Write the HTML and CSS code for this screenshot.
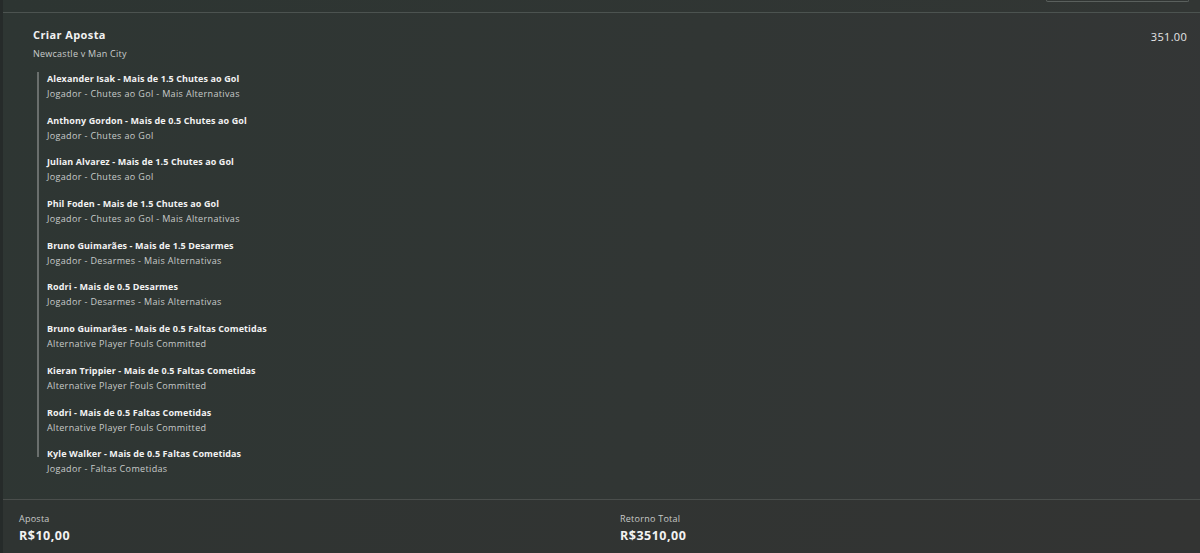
FILE: index.html
```html
<!DOCTYPE html>
<html lang="pt-BR">
<head>
    <meta charset="UTF-8">
    <meta name="viewport" content="width=device-width, initial-scale=1.0">
    <title>Criar Aposta</title>
    <link rel="stylesheet" href="styles.css">
</head>
<body>

    <!-- Top bar -->
    <div class="topbar">
        <div class="topbar-box"></div>
    </div>

    <!-- Bet builder -->
    <section class="builder">
        <div class="builder-head">
            <div>
                <h1 class="builder-title">Criar Aposta</h1>
                <p class="builder-match">Newcastle v Man City</p>
            </div>
            <span class="builder-odds">351.00</span>
        </div>

        <ul class="legs">
            <li class="leg">
                <p class="leg-name">Alexander Isak - Mais de 1.5 Chutes ao Gol</p>
                <p class="leg-market">Jogador - Chutes ao Gol - Mais Alternativas</p>
            </li>
            <li class="leg">
                <p class="leg-name">Anthony Gordon - Mais de 0.5 Chutes ao Gol</p>
                <p class="leg-market">Jogador - Chutes ao Gol</p>
            </li>
            <li class="leg">
                <p class="leg-name">Julian Alvarez - Mais de 1.5 Chutes ao Gol</p>
                <p class="leg-market">Jogador - Chutes ao Gol</p>
            </li>
            <li class="leg">
                <p class="leg-name">Phil Foden - Mais de 1.5 Chutes ao Gol</p>
                <p class="leg-market">Jogador - Chutes ao Gol - Mais Alternativas</p>
            </li>
            <li class="leg">
                <p class="leg-name">Bruno Guimarães - Mais de 1.5 Desarmes</p>
                <p class="leg-market">Jogador - Desarmes - Mais Alternativas</p>
            </li>
            <li class="leg">
                <p class="leg-name">Rodri - Mais de 0.5 Desarmes</p>
                <p class="leg-market">Jogador - Desarmes - Mais Alternativas</p>
            </li>
            <li class="leg">
                <p class="leg-name">Bruno Guimarães - Mais de 0.5 Faltas Cometidas</p>
                <p class="leg-market">Alternative Player Fouls Committed</p>
            </li>
            <li class="leg">
                <p class="leg-name">Kieran Trippier - Mais de 0.5 Faltas Cometidas</p>
                <p class="leg-market">Alternative Player Fouls Committed</p>
            </li>
            <li class="leg">
                <p class="leg-name">Rodri - Mais de 0.5 Faltas Cometidas</p>
                <p class="leg-market">Alternative Player Fouls Committed</p>
            </li>
            <li class="leg">
                <p class="leg-name">Kyle Walker - Mais de 0.5 Faltas Cometidas</p>
                <p class="leg-market">Jogador - Faltas Cometidas</p>
            </li>
        </ul>
    </section>

    <!-- Stake and return -->
    <footer class="summary">
        <div class="summary-col">
            <p class="summary-label">Aposta</p>
            <p class="summary-value">R$10,00</p>
        </div>
        <div class="summary-col">
            <p class="summary-label">Retorno Total</p>
            <p class="summary-value">R$3510,00</p>
        </div>
    </footer>

</body>
</html>
```

FILE: styles.css
```css
* {
    box-sizing: border-box;
}
html, body {
    height: 100%;
}
body {
    font-family: "Open Sans", "Noto Sans", sans-serif;
    margin: 0;
    padding: 0 0 0 3px;
    color: #f2f2f2;
    background-color: #262b2a;
    overflow: hidden;
}
p, h1, ul {
    margin: 0;
    padding: 0;
}
.topbar {
    height: 13px;
    border-bottom: 1px solid #4c5350;
    background: linear-gradient(90deg, #2d3532, #323634);
    display: flex;
    justify-content: flex-end;
    padding-right: 11px;
}
.topbar-box {
    width: 143px;
    height: 2px;
    border: 1px solid #5a605d;
    border-top: none;
    border-radius: 0 0 3px 3px;
}
.builder {
    height: 486px;
    background: linear-gradient(100deg, #2e3633 0%, #313634 55%, #343636 100%);
    padding: 15px 13px 0 30px;
}
.builder-head {
    display: flex;
    justify-content: space-between;
    align-items: flex-start;
}
.builder-title {
    font-size: 11px;
    font-weight: 700;
    line-height: 14px;
    letter-spacing: 0.4px;
}
.builder-match {
    margin-top: 6px;
    font-size: 9px;
    line-height: 12px;
    letter-spacing: 0.25px;
    color: #c9cccb;
}
.builder-odds {
    margin-top: 2px;
    font-size: 11px;
    line-height: 14px;
    letter-spacing: 0.3px;
    color: #e6e6e6;
}
.legs {
    list-style: none;
    margin: 12px 0 0 4px;
    padding: 1px 0 0 8px;
    border-left: 2px solid #6a6f6d;
    width: 300px;
    height: 385px;
}
.leg {
    height: 41.7px;
}
.leg-name {
    font-size: 9px;
    font-weight: 700;
    line-height: 12px;
    letter-spacing: 0.1px;
}
.leg-market {
    margin-top: 3px;
    font-size: 9px;
    line-height: 12px;
    letter-spacing: 0.35px;
    color: #c8cbca;
}
.summary {
    height: 54px;
    border-top: 1px solid #4a4e4c;
    background: linear-gradient(90deg, #2f3432, #333433);
    display: flex;
    padding: 13px 0 0 16px;
}
.summary-col {
    flex: 0 0 601px;
}
.summary-label {
    font-size: 9px;
    line-height: 12px;
    letter-spacing: 0.25px;
    color: #c8cac9;
}
.summary-value {
    margin-top: 3px;
    font-size: 12.5px;
    font-weight: 700;
    line-height: 16px;
    letter-spacing: 0.5px;
}
```
